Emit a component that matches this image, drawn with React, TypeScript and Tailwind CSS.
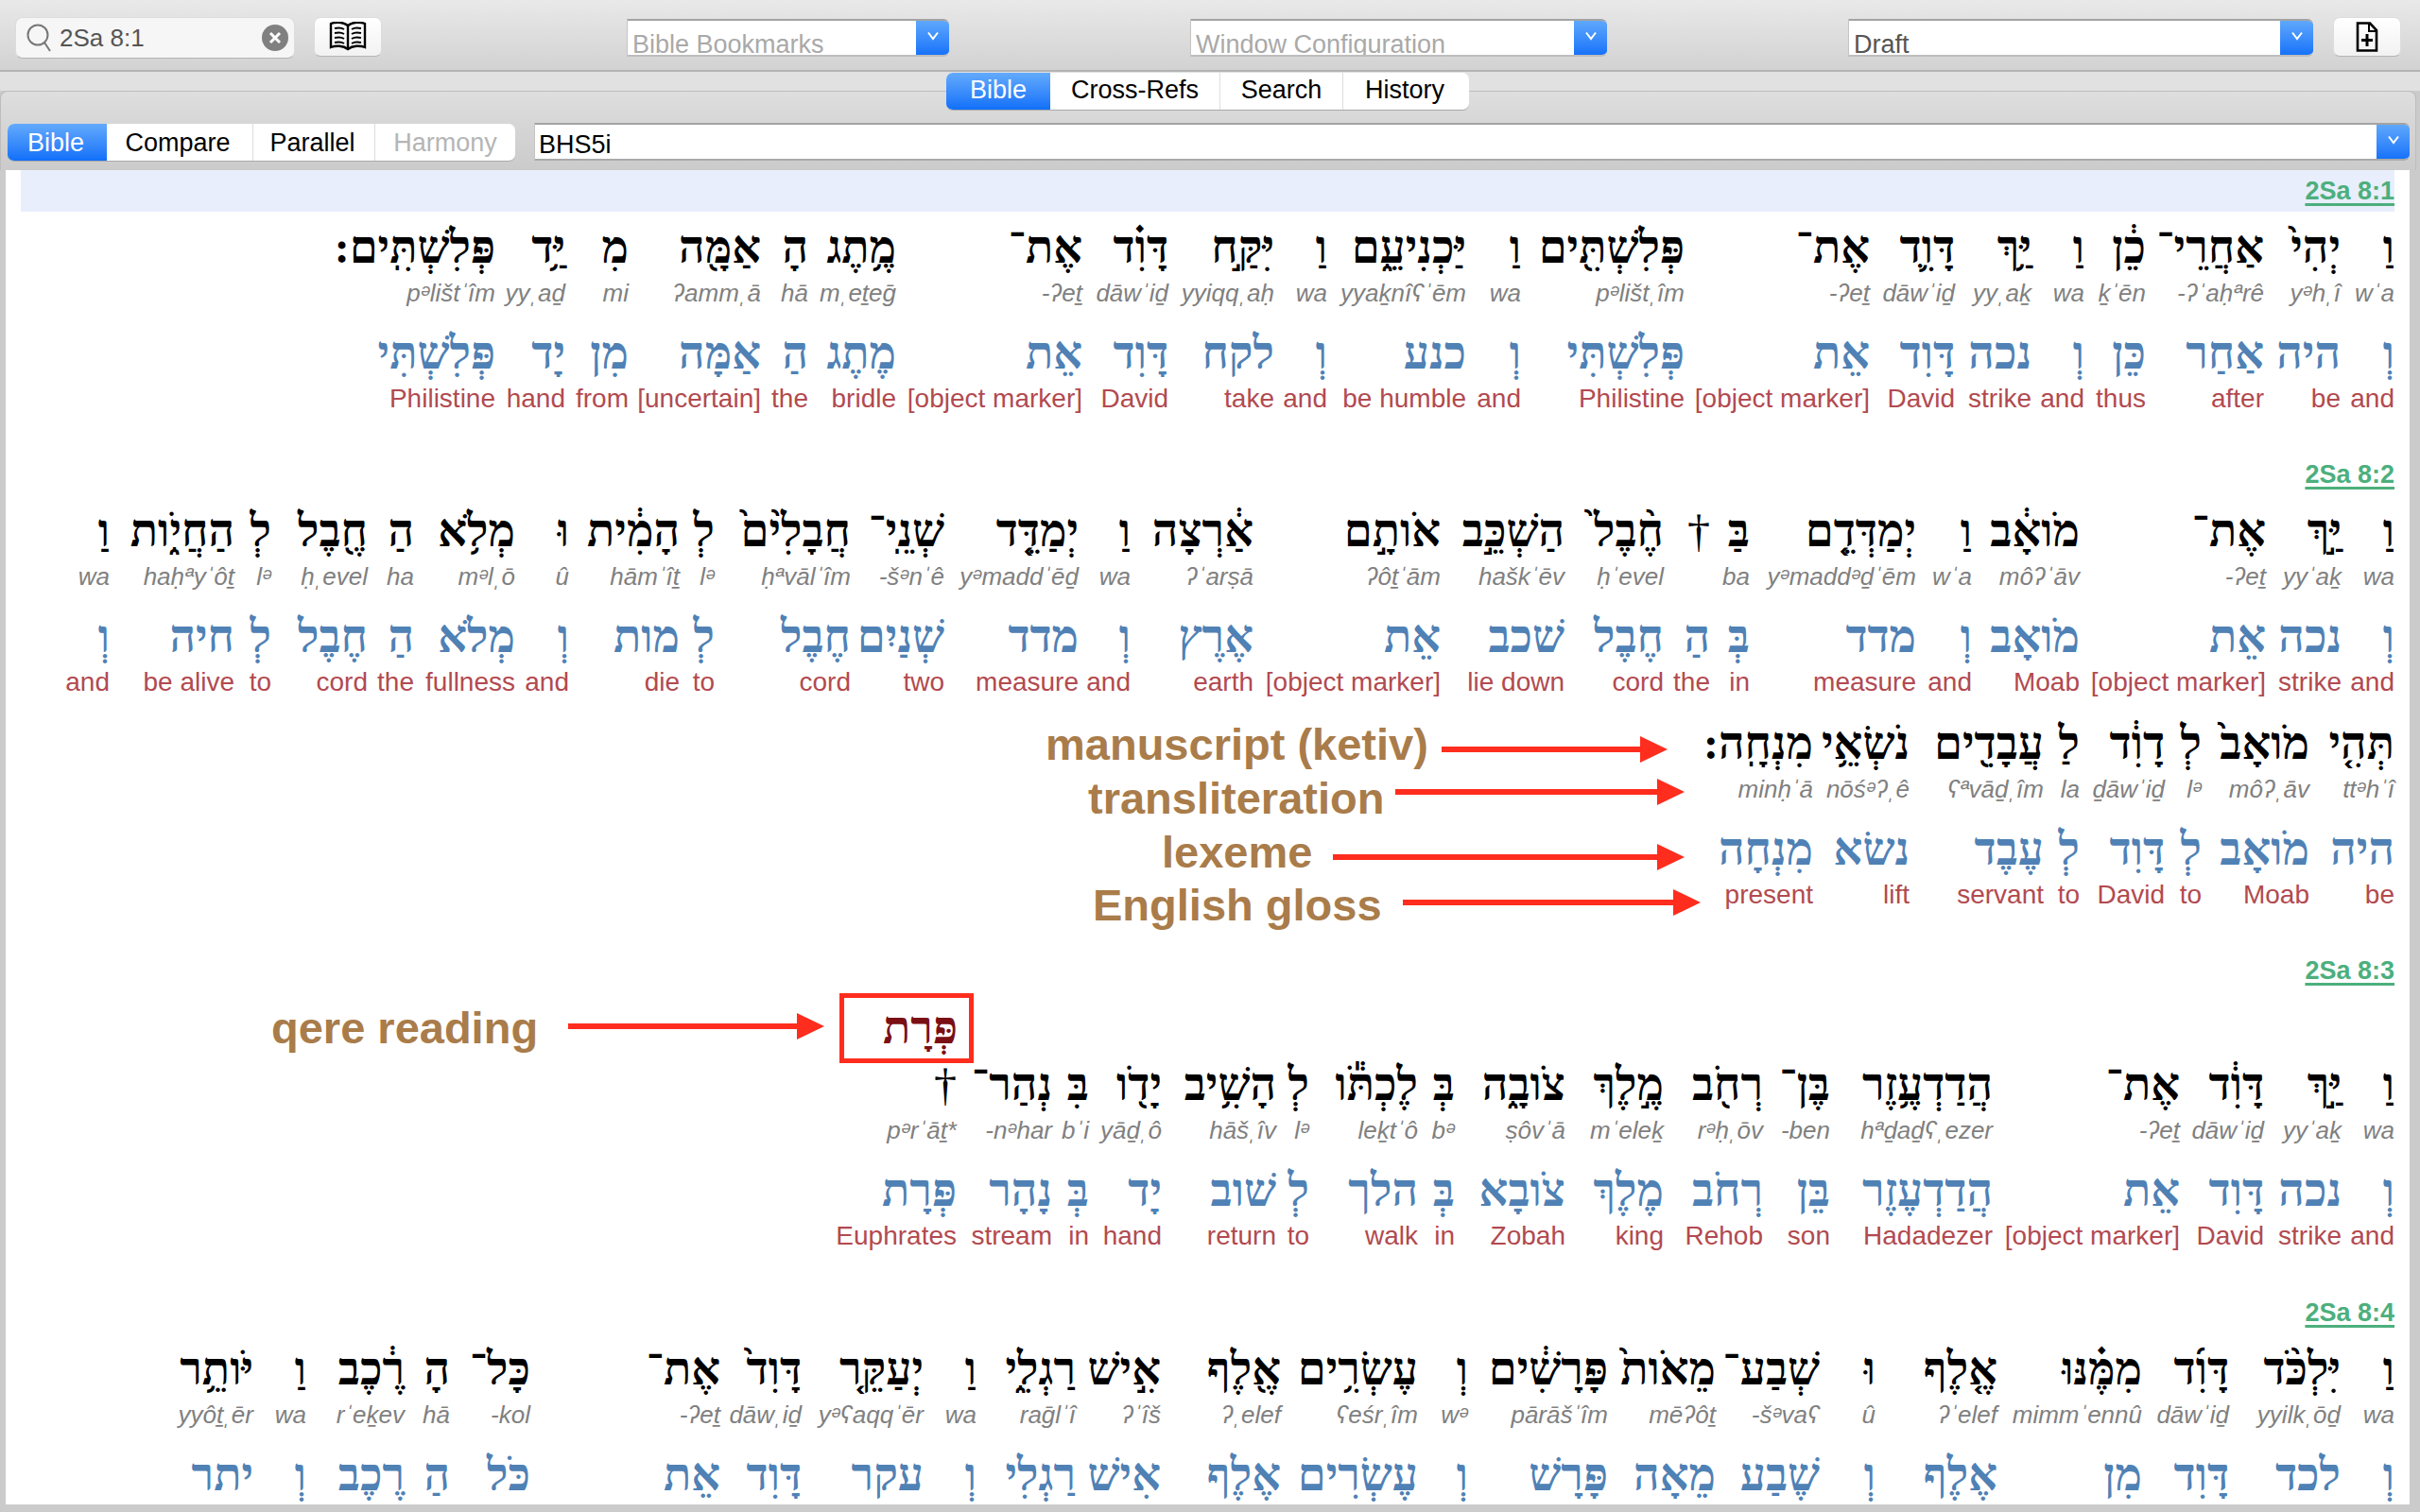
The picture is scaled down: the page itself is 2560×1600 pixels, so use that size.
import React from "react";

type W = [string, string, string, string, string?];

const v1: W[] = [
  ["וַ", "wˈa", "וְ", "and", "w-[57px]"],
  ["יְהִי֙", "yᵊhˌî", "היה", "be", "w-[81px]"],
  ["אַחֲרֵי־", "-ʔˈaḥªrê", "אַחַר", "after", "w-[125px]"],
  ["כֵ֔ן", "ḵˈēn", "כֵּן", "thus", "w-[65px]"],
  ["וַ", "wa", "וְ", "and", "w-[56px]"],
  ["יַּ֥ךְ", "yyˌaḵ", "נכה", "strike", "w-[81px]"],
  ["דָּוִ֛ד", "dāwˈiḏ", "דָּוִד", "David", "w-[90px]"],
  ["אֶת־", "-ʔeṯ", "אֵת", "[object marker]", "w-[196px]"],
  ["פְּלִשְׁתִּ֖ים", "pᵊlištˌîm", "פְּלִשְׁתִּי", "Philistine", "w-[173px]"],
  ["וַ", "wa", "וְ", "and", "w-[58px]"],
  ["יַּכְנִיעֵ֑ם", "yyaḵnîʕˈēm", "כנע", "be humble", "w-[147px]"],
  ["וַ", "wa", "וְ", "and", "w-[56px]"],
  ["יִּקַּ֣ח", "yyiqqˌaḥ", "לקח", "take", "w-[112px]"],
  ["דָּוִ֗ד", "dāwˈiḏ", "דָּוִד", "David", "w-[91px]"],
  ["אֶת־", "-ʔeṯ", "אֵת", "[object marker]", "w-[197px]"],
  ["מֶ֥תֶג", "mˌeṯeḡ", "מֶתֶג", "bridle", "w-[93px]"],
  ["הָ", "hā", "הַ", "the", "w-[50px]"],
  ["אַמָּ֖ה", "ʔammˌā", "אַמָּה", "[uncertain]", "w-[140px]"],
  ["מִ", "mi", "מִן", "from", "w-[67px]"],
  ["יַּ֥ד", "yyˌaḏ", "יָד", "hand", "w-[74px]"],
  ["פְּלִשְׁתִּֽים:", "pᵊlištˈîm", "פְּלִשְׁתִּי", "Philistine"],
];

const v2a: W[] = [
  ["וַ", "wa", "וְ", "and", "w-[56px]"],
  ["יַּ֣ךְ", "yyˈaḵ", "נכה", "strike", "w-[80px]"],
  ["אֶת־", "-ʔeṯ", "אֵת", "[object marker]", "w-[197px]"],
  ["מֹואָ֔ב", "môʔˈāv", "מֹואָב", "Moab", "w-[114px]"],
  ["וַ", "wˈa", "וְ", "and", "w-[59px]"],
  ["יְמַדְּדֵ֤ם", "yᵊmaddᵊḏˈēm", "מדד", "measure", "w-[176px]"],
  ["בַּ", "ba", "בְּ", "in", "w-[42px]"],
  ["†", "", "הַ", "the", "w-[49px]"],
  ["חֶ֨בֶל֙", "ḥˈevel", "חֶבֶל", "cord", "w-[105px]"],
  ["הַשְׁכֵּ֣ב", "haškˈēv", "שׁכב", "lie down", "w-[131px]"],
  ["אֹותָ֣ם", "ʔôṯˈām", "אֵת", "[object marker]", "w-[198px]"],
  ["אַ֔רְצָה", "ʔˈarṣā", "אֶרֶץ", "earth", "w-[130px]"],
  ["וַ", "wa", "וְ", "and", "w-[55px]"],
  ["יְמַדֵּ֤ד", "yᵊmaddˈēḏ", "מדד", "measure", "w-[142px]"],
  ["שְׁנֵֽי־", "-šᵊnˈê", "שְׁנַיִם", "two", "w-[99px]"],
  ["חֲבָלִ֙ים֙", "ḥªvālˈîm", "חֶבֶל", "cord", "w-[144px]"],
  ["לְ", "lᵊ", "לְ", "to", "w-[37px]"],
  ["הָמִ֔ית", "hāmˈîṯ", "מות", "die", "w-[117px]"],
  ["וּ", "û", "וְ", "and", "w-[57px]"],
  ["מְלֹ֥א", "mᵊlˌō", "מְלֹא", "fullness", "w-[107px]"],
  ["הַ", "ha", "הַ", "the", "w-[49px]"],
  ["חֶ֖בֶל", "ḥˌevel", "חֶבֶל", "cord", "w-[102px]"],
  ["לְ", "lᵊ", "לְ", "to", "w-[39px]"],
  ["הַחֲיֹ֑ות", "haḥªyˈôṯ", "חיה", "be alive", "w-[132px]"],
  ["וַ", "wa", "וְ", "and"],
];

const v2b: W[] = [
  ["תְּהִ֤י", "ttᵊhˈî", "היה", "be", "w-[90px]"],
  ["מֹואָב֙", "môʔˌāv", "מֹואָב", "Moab", "w-[114px]"],
  ["לְ", "lᵊ", "לְ", "to", "w-[39px]"],
  ["דָוִ֔ד", "ḏāwˈiḏ", "דָּוִד", "David", "w-[90px]"],
  ["לַ", "la", "לְ", "to", "w-[38px]"],
  ["עֲבָדִ֖ים", "ʕªvāḏˌîm", "עֶבֶד", "servant", "w-[142px]"],
  ["נֹשְׂאֵ֥י", "nōśᵊʔˌê", "נשׂא", "lift", "w-[102px]"],
  ["מִנְחָֽה:", "minḥˈā", "מִנְחָה", "present"],
];

const v3: W[] = [
  ["וַ", "wa", "וְ", "and", "w-[56px]"],
  ["יַּ֣ךְ", "yyˈaḵ", "נכה", "strike", "w-[82px]"],
  ["דָּוִ֔ד", "dāwˈiḏ", "דָּוִד", "David", "w-[89px]"],
  ["אֶת־", "-ʔeṯ", "אֵת", "[object marker]", "w-[198px]"],
  ["הֲדַדְעֶ֥זֶר", "hªḏaḏʕˌezer", "הֲדַדְעֶזֶר", "Hadadezer", "w-[172px]"],
  ["בֶּן־", "-ben", "בֵּן", "son", "w-[71px]"],
  ["רְחֹ֖ב", "rᵊḥˌōv", "רְחֹב", "Rehob", "w-[105px]"],
  ["מֶ֣לֶךְ", "mˈeleḵ", "מֶלֶךְ", "king", "w-[104px]"],
  ["צֹובָ֑ה", "ṣôvˈā", "צֹובָא", "Zobah", "w-[117px]"],
  ["בְּ", "bᵊ", "בְּ", "in", "w-[39px]"],
  ["לֶכְתֹּ֕ו", "leḵtˈô", "הלך", "walk", "w-[115px]"],
  ["לְ", "lᵊ", "לְ", "to", "w-[35px]"],
  ["הָשִׁ֥יב", "hāšˌîv", "שׁוב", "return", "w-[121px]"],
  ["יָדֹ֖ו", "yāḏˌô", "יָד", "hand", "w-[77px]"],
  ["בִּ", "bˈi", "בְּ", "in", "w-[39px]"],
  ["נְהַר־", "-nᵊhar", "נָהָר", "stream", "w-[101px]"],
  ["†", "pᵊrˈāṯ*", "פְּרָת", "Euphrates"],
];

const v4: W[] = [
  ["וַ", "wa", "וְ", "", "w-[57px]"],
  ["יִּלְכֹּ֨ד", "yyilkˌōḏ", "לכד", "", "w-[118px]"],
  ["דָּוִ֜ד", "dāwˈiḏ", "דָּוִד", "", "w-[92px]"],
  ["מִמֶּ֗נּוּ", "mimmˈennû", "מִן", "", "w-[153px]"],
  ["אֶ֤לֶף", "ʔˈelef", "אֶלֶף", "", "w-[129px]"],
  ["וּ", "û", "וְ", "", "w-[59px]"],
  ["שְׁבַע־", "-šᵊvaʕ", "שֶׁבַע", "", "w-[110px]"],
  ["מֵאֹות֙", "mēʔôṯ", "מֵאָה", "", "w-[114px]"],
  ["פָּרָשִׁ֔ים", "pārāšˈîm", "פָּרָשׁ", "", "w-[148px]"],
  ["וְ", "wᵊ", "וְ", "", "w-[53px]"],
  ["עֶשְׂרִ֥ים", "ʕeśrˌîm", "עֶשְׂרִים", "", "w-[145px]"],
  ["אֶ֖לֶף", "ʔˌelef", "אֶלֶף", "", "w-[127px]"],
  ["אִ֣ישׁ", "ʔˈîš", "אִישׁ", "", "w-[90px]"],
  ["רַגְלִ֑י", "raḡlˈî", "רַגְלִי", "", "w-[105px]"],
  ["וַ", "wa", "וְ", "", "w-[56px]"],
  ["יְעַקֵּ֤ר", "yᵊʕaqqˈēr", "עקר", "", "w-[129px]"],
  ["דָּוִד֙", "dāwˌiḏ", "דָּוִד", "", "w-[86px]"],
  ["אֶת־", "-ʔeṯ", "אֵת", "", "w-[201px]"],
  ["כָּל־", "-kol", "כֹּל", "", "w-[85px]"],
  ["הָ", "hā", "הַ", "", "w-[48px]"],
  ["רֶ֔כֶב", "rˈeḵev", "רֶכֶב", "", "w-[104px]"],
  ["וַ", "wa", "וְ", "", "w-[56px]"],
  ["יֹּותֵ֥ר", "yyôṯˌēr", "יתר", ""],
];

function Word({ w }: { w: W }) {
  const heb = w[0] === "†" ? "font-normal" : "font-bold";
  return (
    <div className={"flex flex-col items-end shrink-0 whitespace-nowrap " + (w[4] || "")}>
      <div dir="rtl" className={"h-[64px] leading-[64px] text-[48px] text-black font-['Liberation_Serif',serif] " + heb}>{w[0]}</div>
      <div className="h-[33px] leading-[33px] text-[26px] italic text-[#808080]">{w[1] || "\u00a0"}</div>
      <div dir="rtl" className="mt-[15px] h-[64px] leading-[64px] text-[48px] font-bold text-[#4f81b5] font-['Liberation_Serif',serif]">{w[2]}</div>
      <div className="h-[32px] leading-[32px] text-[28px] text-[#b24a50] mb-[17px]">{w[3]}</div>
    </div>
  );
}

function Line({ words }: { words: W[] }) {
  return (
    <div className="flex flex-row-reverse justify-start h-[225px]">
      {words.map((w, i) => (
        <Word key={i} w={w} />
      ))}
    </div>
  );
}

function Ref({ t, band }: { t: string; band?: boolean }) {
  return (
    <div className={band ? "h-[44px] mb-[6px] flex items-center justify-end bg-[#e8eefb]" : "h-[44px] mb-[6px] flex items-center justify-end"}>
      <span className="text-[27px] font-bold text-[#4caf7d] underline decoration-[3px] underline-offset-[4px]">{t}</span>
    </div>
  );
}

function Chevron() {
  return (
    <svg width="14" height="10" viewBox="0 0 14 10" fill="none" stroke="white" strokeWidth="2">
      <path d="M2 1.5 L7 8 L12 1.5" />
    </svg>
  );
}

function Select({ text, cls, tcls }: { text: string; cls: string; tcls: string }) {
  return (
    <div className={"flex h-[40px] overflow-hidden bg-white border-t-2 border-b-2 border-l border-t-[#a3a3a3] border-b-[#bdbdbd] border-l-[#c4c4c4] rounded-r-[6px] " + cls}>
      <div className={"flex-1 h-[40px] pl-[5px] text-[27px] leading-[51px] whitespace-nowrap overflow-hidden " + tcls}>{text}</div>
      <div className="w-[35px] -mt-[2px] h-[40px] flex items-center justify-center pb-[4px] bg-gradient-to-b from-[#62aafc] to-[#0f6ff9]">
        <Chevron />
      </div>
    </div>
  );
}

function Btn({ cls, children }: { cls: string; children: React.ReactNode }) {
  return (
    <div className={"h-[42px] mt-[18px] rounded-[7px] bg-gradient-to-b from-white to-[#f2f2f2] border border-[#dcdcdc] border-b-[#b5b5b5] flex items-center justify-center " + cls}>
      {children}
    </div>
  );
}

function Arrow({ cls, w }: { cls: string; w: number }) {
  return (
    <svg className={"absolute " + cls} height="28" viewBox={`0 0 ${w} 28`}>
      <rect x="0" y="11" width={w - 28} height="6" fill="#ff2d1e" />
      <polygon points={`${w - 29},0 ${w},14 ${w - 29},28`} fill="#ff2d1e" />
    </svg>
  );
}

const brown = "absolute text-[47px] leading-[50px] font-bold text-[#a97c4a] whitespace-nowrap ";

export default function App() {
  return (
    <div className="relative w-[2560px] h-[1600px] overflow-hidden bg-[#cbcbcb] font-['Liberation_Sans',sans-serif]">
      {/* toolbar */}
      <div className="h-[76px] flex pl-[16px] items-start bg-gradient-to-b from-[#e9e9e9] to-[#d2d2d2] border-b-2 border-[#b3b3b3]">
        <div className="w-[296px] h-[44px] mt-[18px] rounded-[8px] bg-[#f6f6f6] border border-[#dcdcdc] border-b-[#b5b5b5] flex items-center pl-[10px] pr-[6px]">
          <svg width="30" height="32" viewBox="0 0 30 32" fill="none" stroke="#777" strokeWidth="2">
            <circle cx="13" cy="13" r="10.5" />
            <path d="M20 21 L26 30" />
          </svg>
          <span className="ml-[6px] flex-1 text-[26px] leading-[44px] text-[#555]">2Sa 8:1</span>
          <svg width="28" height="28" viewBox="0 0 28 28">
            <circle cx="14" cy="14" r="14" fill="#808080" />
            <path d="M9 9 L19 19 M19 9 L9 19" stroke="white" strokeWidth="3" />
          </svg>
        </div>
        <Btn cls="ml-[20px] w-[72px]">
          <svg width="42" height="32" viewBox="0 0 42 32" fill="none" stroke="#000" strokeWidth="2.4">
            <path d="M21 4 C16 0 8 0 3 2 V27 C8 25 16 25 21 29 C26 25 34 25 39 27 V2 C34 0 26 0 21 4 Z" />
            <path d="M21 4 V29" />
            <path d="M7 7 C11 6 14 6 17 8 M7 12 C11 11 14 11 17 13 M7 17 C11 16 14 16 17 18 M7 22 C11 21 14 21 17 23 M35 7 C31 6 28 6 25 8 M35 12 C31 11 28 11 25 13 M35 17 C31 16 28 16 25 18 M35 22 C31 21 28 21 25 23" strokeWidth="2" />
          </svg>
        </Btn>
        <div className="ml-[259px] mt-[20px]">
          <Select text="Bible Bookmarks" cls="w-[341px]" tcls="text-[#a9a9a9]" />
        </div>
        <div className="ml-[255px] mt-[20px]">
          <Select text="Window Configuration" cls="w-[441px]" tcls="text-[#a9a9a9]" />
        </div>
        <div className="ml-[255px] mt-[20px]">
          <Select text="Draft" cls="w-[492px]" tcls="text-[#555]" />
        </div>
        <Btn cls="ml-[21px] w-[72px]">
          <svg width="24" height="32" viewBox="0 0 24 32" fill="none" stroke="#000" strokeWidth="2.6">
            <path d="M2 1.5 H15 L22 9 V30.5 H2 Z" />
            <path d="M14 1.5 V10 H22" strokeWidth="2" />
            <path d="M12 13 V26 M6 19.5 H18" strokeWidth="3" />
          </svg>
        </Btn>
      </div>

      <div className="h-[20px] bg-[#e1e1e1]" />

      {/* panel head */}
      <div className="w-[2556px] h-[84px] rounded-t-[8px] border-t border-l border-r border-[#bdbdbd] bg-gradient-to-b from-[#dedede] to-[#cbcbcb] pt-[34px] pl-[7px] pr-[6px]">
        <div className="flex">
          <div className="flex h-[40px] w-[537px] rounded-[7px] overflow-hidden bg-white text-[27px] leading-[41px] border-b border-[#a9a9a9]">
            <div className="w-[105px] pr-[3px] text-center text-white bg-gradient-to-b from-[#62aafc] to-[#0f6ff9]">Bible</div>
            <div className="w-[154px] pr-[4px] text-center text-black">Compare</div>
            <div className="w-[129px] pr-[3px] text-center text-black border-l border-[#dedede]">Parallel</div>
            <div className="w-[149px] text-center text-[#b5b5b5] border-l border-[#dedede]">Harmony</div>
          </div>
          <div className="ml-[20px] -mt-[1px] flex-1 h-[40px] flex bg-white border-t-2 border-b-2 border-l border-t-[#a3a3a3] border-b-[#a9a9a9] border-l-[#c4c4c4] rounded-r-[6px] overflow-hidden">
            <div className="flex-1 pl-[4px] text-[27px] leading-[42px] text-black">BHS5i</div>
            <div className="w-[35px] -mt-[2px] h-[40px] flex items-center justify-center pb-[4px] bg-gradient-to-b from-[#62aafc] to-[#0f6ff9]">
              <Chevron />
            </div>
          </div>
        </div>
      </div>

      {/* text area */}
      <div className="ml-[6px] w-[2543px] h-[1412px] overflow-hidden bg-white pl-[16px] pr-[16px]">
        <Ref t="2Sa 8:1" band />
        <Line words={v1} />
        <div className="h-[25px]" />
        <Ref t="2Sa 8:2" />
        <Line words={v2a} />
        <Line words={v2b} />
        <div className="h-[25px]" />
        <Ref t="2Sa 8:3" />
        <div className="h-[61px]" />
        <Line words={v3} />
        <div className="h-[26px]" />
        <Ref t="2Sa 8:4" />
        <Line words={v4} />
      </div>

      {/* tab strip overlapping the panel edge */}
      <div className="absolute left-[1001px] top-[77px] flex h-[40px] rounded-[7px] overflow-hidden bg-white text-[27px] leading-[37px] border-b border-[#a9a9a9]">
        <div className="w-[110px] text-center text-white bg-gradient-to-b from-[#62aafc] to-[#0f6ff9]">Bible</div>
        <div className="w-[179px] text-center text-black">Cross-Refs</div>
        <div className="w-[130px] text-center text-black border-l border-[#dedede]">Search</div>
        <div className="w-[134px] pr-[3px] text-center text-black border-l border-[#dedede]">History</div>
      </div>

      {/* annotations */}
      <div className={brown + "left-[1106px] top-[763px]"}>manuscript (ketiv)</div>
      <div className={brown + "left-[1151px] top-[820px]"}>transliteration</div>
      <div className={brown + "left-[1229px] top-[877px]"}>lexeme</div>
      <div className={brown + "left-[1156px] top-[933px]"}>English gloss</div>
      <div className={brown + "left-[287px] top-[1063px]"}>qere reading</div>
      <Arrow cls="left-[1525px] top-[779px] w-[239px]" w={239} />
      <Arrow cls="left-[1476px] top-[824px] w-[306px]" w={306} />
      <Arrow cls="left-[1410px] top-[893px] w-[372px]" w={372} />
      <Arrow cls="left-[1484px] top-[941px] w-[315px]" w={315} />
      <Arrow cls="left-[601px] top-[1072px] w-[271px]" w={271} />
      <div dir="rtl" className="absolute left-[888px] top-[1051px] w-[142px] h-[74px] border-[5px] border-[#ff2d1e] flex items-center justify-start pr-[12px] text-[48px] leading-[60px] font-bold text-[#7a0f14] font-['Liberation_Serif',serif]">
        פְּרָת
      </div>
    </div>
  );
}
